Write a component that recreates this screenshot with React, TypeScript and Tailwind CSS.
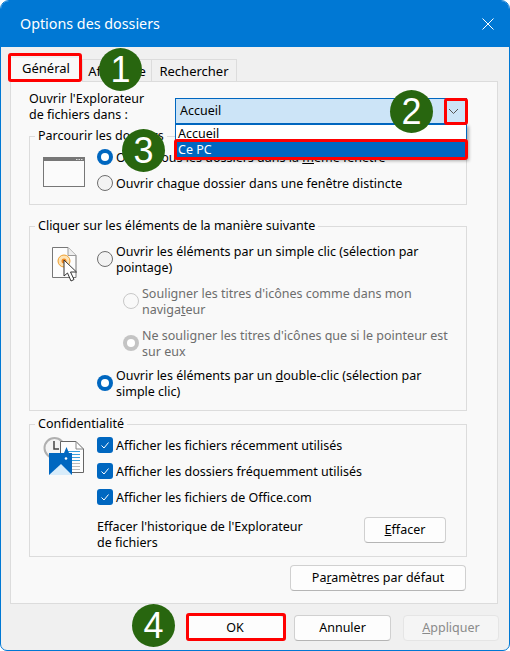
import type { ReactNode } from 'react'

const Radio = ({ on = false, off = false }: { on?: boolean; off?: boolean }) => {
  if (on) {
    return (
      <span className={`flex h-4 w-4 shrink-0 items-center justify-center rounded-full ${off ? 'bg-[#c4c4c4]' : 'bg-[#0067c0]'}`}>
        <span className="h-2 w-2 rounded-full bg-white" />
      </span>
    )
  }
  return (
    <span className={`h-4 w-4 shrink-0 rounded-full border ${off ? 'border-[#c8c8c8] bg-[#f9f9f9]' : 'border-[#6e6e6e] bg-[#f3f3f3]'}`} />
  )
}

const Check = () => (
  <span className="flex h-4 w-4 shrink-0 items-center justify-center rounded-[3px] bg-[#0067c0]">
    <svg width="10" height="10" viewBox="0 0 10 10" fill="none" stroke="white" strokeWidth="1">
      <path d="M1.5 5.5 L4 8 L8.5 2.5" />
    </svg>
  </span>
)

const Group = ({ title, className, children }: { title: string; className: string; children: ReactNode }) => (
  <fieldset className={`ml-[18px] mr-[30px] border border-[#dcdcdc] ${className}`}>
    <legend className="ml-[5px] px-[3px] leading-4">{title}</legend>
    {children}
  </fieldset>
)

const Button = ({ className, children }: { className: string; children: ReactNode }) => (
  <button className={`flex h-[26px] items-center justify-center rounded-[4px] border border-[#d0d0d0] border-b-[#b5b5b5] bg-[#fdfdfd] ${className}`}>
    {children}
  </button>
)

const Badge = ({ n, className }: { n: number; className: string }) => (
  <div
    className={`absolute z-30 flex h-[43px] w-[43px] items-center justify-center rounded-full bg-[#28660f] text-[36px] text-white ${className}`}
    style={{ fontFamily: '"Liberation Sans", sans-serif' }}
  >
    {n}
  </div>
)

const RedBox = ({ className }: { className: string }) => (
  <div className={`absolute z-20 rounded-[3px] border-[3px] border-[#ff0000] ${className}`} />
)

export default function App() {
  return (
    <div
      className="relative h-[651px] w-[510px] overflow-hidden rounded-t-[9px] rounded-b-[7px] border border-[#0078d4] bg-[#f0f0f0] text-[12.5px] leading-4 text-black"
      style={{ fontFamily: '"Noto Sans", "Open Sans", sans-serif' }}
    >
      <div className="flex h-[46px] items-center justify-between bg-[#0078d4] pl-[19px] pr-[15px] text-[14.3px] text-white">
        <span>Options des dossiers</span>
        <svg width="12" height="12" viewBox="0 0 12 12" stroke="white" strokeWidth="1">
          <path d="M0.5 0.5 L11.5 11.5 M11.5 0.5 L0.5 11.5" />
        </svg>
      </div>

      <div className="ml-[9px] flex h-[34px] items-end text-[13px]">
        <div className="z-10 -mb-px flex h-[24px] w-[72px] items-center justify-center bg-[#f9f9f9] pb-1">Général</div>
        <div className="flex h-[22px] w-[70px] items-center justify-center border border-b-0 border-[#dcdcdc] bg-[#f0f0f0]">Affichage</div>
        <div className="flex h-[22px] w-[85px] items-center justify-center border border-b-0 border-l-0 border-[#dcdcdc] bg-[#f0f0f0]">Rechercher</div>
      </div>

      <div className="ml-[9px] flex h-[523px] w-[488px] flex-col border border-[#dcdcdc] bg-[#f9f9f9]">
        <div className="ml-[18px] mt-[8px] flex h-[38px]">
          <div className="w-[146px] translate-y-px">
            Ouvrir l'Explorateur
            <br />
            de fichiers dans :
          </div>
          <div className="mt-[8px] flex h-[26px] w-[292px] items-center justify-between border border-[#0067c0] bg-[#cce4f7] pl-[4px] pr-[7px]">
            <span>Accueil</span>
            <svg width="11" height="7" viewBox="0 0 11 7" fill="none" stroke="#555" strokeWidth="1">
              <path d="M1 1 L5.5 5.5 L10 1" />
            </svg>
          </div>
        </div>

        <Group title="Parcourir les dossiers" className="flex h-[77px]">
          <div className="w-[67px] pl-[13px] pt-[13px]">
            <svg width="43" height="30" viewBox="0 0 43 30" fill="none">
              <rect x="0.5" y="0.5" width="41" height="29" fill="#fbfbfb" stroke="#777" />
              <rect x="1" y="1" width="40" height="3" fill="#777" />
              <path d="M33 2.5 h1.5 M35.5 2.5 h1.5 M38 2.5 h1.5" stroke="#ddd" />
            </svg>
          </div>
          <div className="flex flex-col gap-[10px] pt-[5px]">
            <div className="flex items-center gap-[3px]">
              <Radio on />
              <span className="translate-y-px">
                Ouvrir tous les dossiers dans la <u>m</u>ême fenêtre
              </span>
            </div>
            <div className="flex items-center gap-[3px]">
              <Radio />
              <span className="translate-y-px">
                Ouvrir cha<u>q</u>ue dossier dans une fenêtre distincte
              </span>
            </div>
          </div>
        </Group>

        <Group title="Cliquer sur les éléments de la manière suivante" className="mt-[13px] flex h-[193px]">
          <div className="w-[67px] pl-[22px] pt-[13px]">
            <svg width="28" height="36" viewBox="0 0 28 36" fill="none">
              <path d="M0.5 0.5 H16 L24 8.5 V30.5 H0.5 Z" fill="#fdfdfd" stroke="#777" />
              <path d="M16 0.5 V8.5 H24" fill="#eee" stroke="#999" />
              <circle cx="12" cy="14" r="6" fill="#fde3b5" stroke="#f0a030" />
              <circle cx="12" cy="14" r="2.5" fill="#f08a24" />
              <path d="M12 13 V29 L15.5 26 L19 34 L22 32.5 L18.5 25 H24.5 Z" fill="white" stroke="#333" />
            </svg>
          </div>
          <div className="flex flex-col pt-[9px]">
            <div className="flex items-center gap-[3px]">
              <Radio />
              <span className="w-[330px] translate-y-px">Ouvrir les éléments par un simple clic (sélection par pointage)</span>
            </div>
            <div className="ml-[26px] mt-[10px] flex items-center gap-[3px] text-[#6d6d6d]">
              <Radio off />
              <span className="w-[315px] translate-y-px">
                Souligner les titres d'icônes comme dans mon naviga<u>t</u>eur
              </span>
            </div>
            <div className="ml-[26px] mt-[10px] flex items-center gap-[3px] text-[#6d6d6d]">
              <Radio on off />
              <span className="w-[315px] translate-y-px">Ne souligner les titres d'icônes que si le pointeur est sur eux</span>
            </div>
            <div className="mt-[8px] flex items-center gap-[3px]">
              <Radio on />
              <span className="w-[330px] translate-y-px">
                Ouvrir les éléments par un <u>d</u>ouble-clic (sélection par simple clic)
              </span>
            </div>
          </div>
        </Group>

        <Group title="Confidentialité" className="mt-[5px] flex h-[141px]">
          <div className="w-[67px] pl-[13px] pt-[5px]">
            <svg width="42" height="38" viewBox="0 0 42 38" fill="none">
              <circle cx="11.5" cy="11" r="10" fill="#f4f4f4" stroke="#b0b0b0" strokeWidth="2" />
              <path d="M11 4 V12 H16" stroke="#444" strokeWidth="1.5" />
              <path d="M17.5 4.5 H33 L40.5 12 V35.5 H17.5 Z" fill="#fdfdfd" stroke="#666" />
              <path d="M33 4.5 V12 H40.5" stroke="#888" />
              <path d="M25 14.5 H37 M25 17.5 H37 M25 20.5 H37 M25 23.5 H37" stroke="#39a0dd" />
              <path d="M29 26.5 H37 M29 29.5 H37 M29 32.5 H37" stroke="#bbb" />
              <path d="M6 16 H21 L23.5 10 L26 16 H29 V38 H6 Z" fill="#0067c0" />
              <path d="M6 38 L18 27 L29 38 Z" fill="#d8ecfa" />
              <circle cx="23" cy="21.5" r="1.3" fill="white" />
            </svg>
          </div>
          <div className="flex flex-col pt-[5px]">
            <div className="flex items-center gap-[3px]"><Check /><span className="translate-y-px">Afficher les fichiers récemment utilisés</span></div>
            <div className="mt-[10px] flex items-center gap-[3px]"><Check /><span className="translate-y-px">Afficher les dossiers fréquemment utilisés</span></div>
            <div className="mt-[10px] flex items-center gap-[3px]"><Check /><span className="translate-y-px">Afficher les fichiers de Office.com</span></div>
            <div className="mt-[13px] flex items-start">
              <span className="w-[267px] translate-y-px">
                Effacer l'historique de l'Explorateur
                <br />
                de fichiers
              </span>
              <Button className="-mt-[1px] w-[82px]">
                <span><u>E</u>ffacer</span>
              </Button>
            </div>
          </div>
        </Group>

        <div className="mr-[31px] mt-[8px] flex justify-end">
          <Button className="w-[176px]">
            <span>Pa<u>r</u>amètres par défaut</span>
          </Button>
        </div>
      </div>

      <div className="ml-[185px] mt-[11px] flex gap-[10px]">
        <Button className="w-[98px]">OK</Button>
        <Button className="w-[97px]">Annuler</Button>
        <button className="ml-[2px] flex h-[26px] w-[96px] items-center justify-center rounded-[4px] border border-[#e5e5e5] bg-[#f5f5f5] text-[#8a8a8a]">
          <span><u>A</u>ppliquer</span>
        </button>
      </div>

      <div className="absolute left-[174px] top-[123px] w-[292px] border border-[#0067c0] bg-white shadow-[2px_2px_3px_rgba(0,0,0,0.3)]">
        <div className="h-[16px] translate-y-px pl-[2px]">Accueil</div>
        <div className="h-[17px] bg-[#0067c0] pl-[2px] text-white">
          <span className="inline-block translate-y-px">Ce PC</span>
        </div>
      </div>

      <RedBox className="left-[7px] top-[52px] h-[29px] w-[74px]" />
      <RedBox className="left-[443px] top-[97px] h-[27px] w-[24px]" />
      <RedBox className="left-[173px] top-[138px] h-[21px] w-[294px]" />
      <RedBox className="left-[185px] top-[612px] h-[28px] w-[100px]" />

      <Badge n={1} className="left-[98px] top-[47px]" />
      <Badge n={2} className="left-[389px] top-[89px]" />
      <Badge n={3} className="left-[121px] top-[128px]" />
      <Badge n={4} className="left-[131px] top-[603px]" />
    </div>
  )
}
